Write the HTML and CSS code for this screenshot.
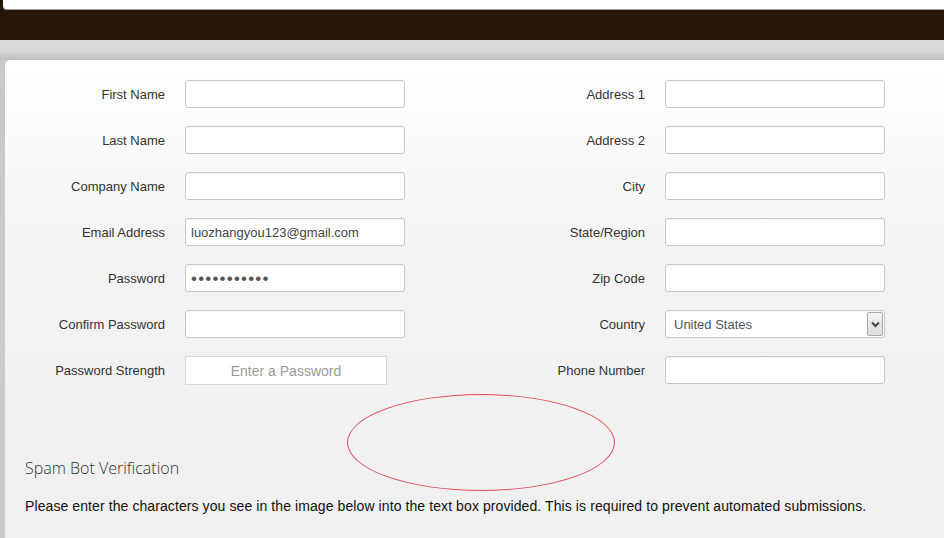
FILE: index.html
```html
<!DOCTYPE html>
<html>
<head>
<meta charset="utf-8">
<link rel="stylesheet" href="styles.css">
</head>
<body>
<header class="header">
  <div class="header-strip"></div>
</header>
<div class="band"></div>
<main class="page">
  <div class="panel">
    <form class="form-grid">
      <div class="col">
        <div class="row"><label class="lbl">First Name</label><div class="field"></div></div>
        <div class="row"><label class="lbl">Last Name</label><div class="field"></div></div>
        <div class="row"><label class="lbl">Company Name</label><div class="field"></div></div>
        <div class="row"><label class="lbl">Email Address</label><div class="field"><span class="val">luozhangyou123@gmail.com</span></div></div>
        <div class="row"><label class="lbl">Password</label><div class="field"><span class="dots">•••••••••••</span></div></div>
        <div class="row"><label class="lbl">Confirm Password</label><div class="field"></div></div>
        <div class="row"><label class="lbl">Password Strength</label><div class="strength">Enter a Password</div></div>
      </div>
      <div class="col">
        <div class="row"><label class="lbl">Address 1</label><div class="field"></div></div>
        <div class="row"><label class="lbl">Address 2</label><div class="field"></div></div>
        <div class="row"><label class="lbl">City</label><div class="field"></div></div>
        <div class="row"><label class="lbl">State/Region</label><div class="field"></div></div>
        <div class="row"><label class="lbl">Zip Code</label><div class="field"></div></div>
        <div class="row"><label class="lbl">Country</label>
          <div class="field select"><span class="sel-val">United States</span>
            <span class="sel-btn"><svg width="9" height="7" viewBox="0 0 9 7"><path d="M1 1.5 L4.5 5 L8 1.5" fill="none" stroke="#444" stroke-width="2"/></svg></span>
          </div>
        </div>
        <div class="row"><label class="lbl">Phone Number</label><div class="field"></div></div>
      </div>
    </form>
    <section class="spam">
      <h2 class="spam-title">Spam Bot Verification</h2>
      <p class="spam-text">Please enter the characters you see in the image below into the text box provided. This is required to prevent automated submissions.</p>
    </section>
    <div class="annotation"></div>
  </div>
</main>
</body>
</html>
```

FILE: styles.css
```css
html, body {
  margin: 0;
  padding: 0;
}
body {
  background: #dadbdc;
  font-family: "Liberation Sans", Arial, sans-serif;
  width: 944px;
  height: 538px;
  overflow: hidden;
}
.header {
  background: #24170a;
  height: 40px;
}
.header-strip {
  height: 9px;
  margin-left: 3px;
  background: #fff;
  border-bottom: 1px solid #9a9a9a;
  border-bottom-left-radius: 4px;
}
.band {
  height: 20px;
  background: linear-gradient(#dadbdc 0%, #d8d9da 55%, #bdbdbd 100%);
}
.page {
  background: #c9c9c9;
  padding-left: 5px;
  height: 478px;
}
.panel {
  position: relative;
  height: 100%;
  background: linear-gradient(#ffffff 0px, #f3f3f3 200px, #f0f0f0 400px);
  border-top-left-radius: 5px;
  padding: 20px 0 0 20px;
  box-sizing: border-box;
}
.form-grid {
  display: grid;
  grid-template-columns: 400px 400px;
  column-gap: 80px;
  margin-left: -20px;
}
.col {
  display: flex;
  flex-direction: column;
  gap: 18px;
}
.row {
  display: flex;
  align-items: center;
  gap: 20px;
  height: 28px;
}
.lbl {
  width: 160px;
  text-align: right;
  font-size: 13px;
  color: #333;
}
.field {
  width: 220px;
  height: 28px;
  box-sizing: border-box;
  background: #fff;
  border: 1px solid #c8c8c8;
  border-radius: 3px;
  box-shadow: inset 0 1px 1px rgba(0,0,0,0.04);
  display: flex;
  align-items: center;
  padding-left: 5px;
  font-size: 13px;
  color: #444;
}
.dots {
  font-size: 17px;
  letter-spacing: 1.2px;
  color: #555;
  line-height: 1;
}
.strength {
  width: 202px;
  height: 29px;
  box-sizing: border-box;
  background: #fff;
  border: 1px solid #d6d6d6;
  display: flex;
  align-items: center;
  justify-content: center;
  font-size: 14px;
  color: #9a9a9a;
  margin-top: 1px;
}
.select {
  justify-content: space-between;
  padding-left: 8px;
  padding-right: 1px;
}
.sel-val {
  color: #555;
}
.sel-btn {
  width: 16px;
  height: 24px;
  box-sizing: border-box;
  border: 1px solid #a8a8a8;
  border-radius: 2px;
  background: linear-gradient(#f4f4f4, #dcdcdc);
  display: flex;
  align-items: center;
  justify-content: center;
}
.spam {
  margin-top: 73px;
}
.spam-title {
  margin: 0;
  font-family: "Open Sans", sans-serif;
  font-weight: 300;
  font-size: 16px;
  color: #333;
  line-height: 22px;
}
.spam-text {
  margin: 18px 0 0;
  font-size: 14px;
  letter-spacing: 0.09px;
  color: #111;
  line-height: 18px;
}
.annotation {
  position: absolute;
  left: 342px;
  top: 334px;
  width: 268px;
  height: 97px;
  box-sizing: border-box;
  border: 1px solid #e0505a;
  border-radius: 50%;
}
```
